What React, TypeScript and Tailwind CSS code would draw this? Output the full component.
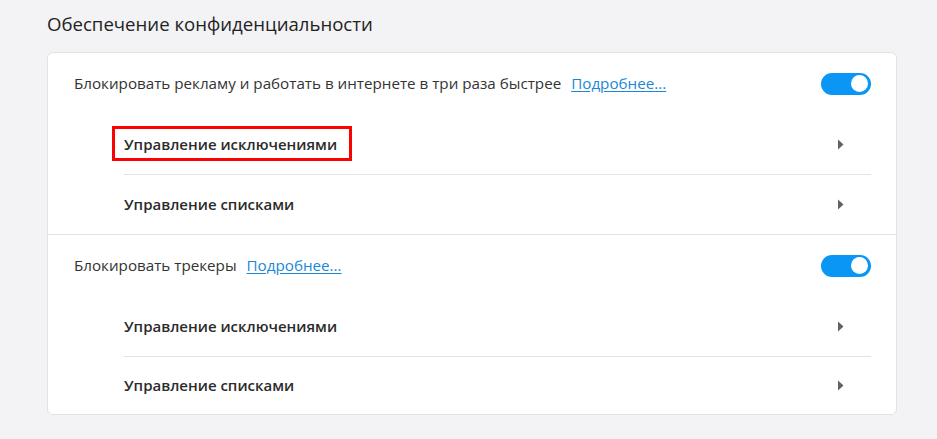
import React from 'react'

const font = { fontFamily: '"Open Sans", "Noto Sans", "Liberation Sans", sans-serif' }

function Toggle() {
  return (
    <div className="flex h-[22px] w-[50px] items-center justify-end rounded-full bg-[#0a96f5] pr-[3px]">
      <div className="h-[17px] w-[17px] rounded-full bg-white" />
    </div>
  )
}

function Arrow() {
  return (
    <svg width="7" height="11" viewBox="0 0 7 11" className="mr-[27px]">
      <path d="M1 0.5 L6.5 5.5 L1 10.5 Z" fill="#5f6368" />
    </svg>
  )
}

function SubRow({ label, first, marked }: { label: string; first?: boolean; marked?: boolean }) {
  return (
    <div
      className={
        'ml-[76px] mr-[25px] flex h-[60px] items-center justify-between ' +
        (first ? '' : 'border-t border-[#e3e3e3]')
      }
    >
      <span className="relative text-[15px] font-semibold text-[#2b2b2b]">
        {label}
        {marked && (
          <span className="absolute -left-[12px] -right-[15px] -top-[7px] -bottom-[6px] border-[3px] border-[#f00] pointer-events-none" />
        )}
      </span>
      <Arrow />
    </div>
  )
}

function Section({ text, top, rows }: { text: string; top?: boolean; rows: { label: string; marked?: boolean }[] }) {
  return (
    <div className={top ? '' : 'border-t border-[#e3e3e3]'}>
      <div className="flex h-[61px] items-center justify-between pl-[26px] pr-[25px]">
        <div className="flex items-center gap-[10px] text-[15.2px] text-[#333]">
          <span>{text}</span>
          <a href="#" className="text-[#1b87d6] underline underline-offset-2">Подробнее...</a>
        </div>
        <Toggle />
      </div>
      {rows.map((r, i) => (
        <SubRow key={i} label={r.label} first={i === 0} marked={r.marked} />
      ))}
    </div>
  )
}

export default function App() {
  return (
    <div className="min-h-screen bg-[#f3f3f5] px-[47px] pt-[11px]" style={font}>
      <h2 className="text-[18.6px] leading-[26px] text-[#222]">Обеспечение конфиденциальности</h2>
      <div className="mt-[15px] w-[850px] overflow-hidden rounded-[6px] border border-[#e2e2e5] bg-white [&>div:last-child>div:last-child]:h-[58px]">
        <Section
          top
          text="Блокировать рекламу и работать в интернете в три раза быстрее"
          rows={[{ label: 'Управление исключениями', marked: true }, { label: 'Управление списками' }]}
        />
        <Section
          text="Блокировать трекеры"
          rows={[{ label: 'Управление исключениями' }, { label: 'Управление списками' }]}
        />
      </div>
    </div>
  )
}
